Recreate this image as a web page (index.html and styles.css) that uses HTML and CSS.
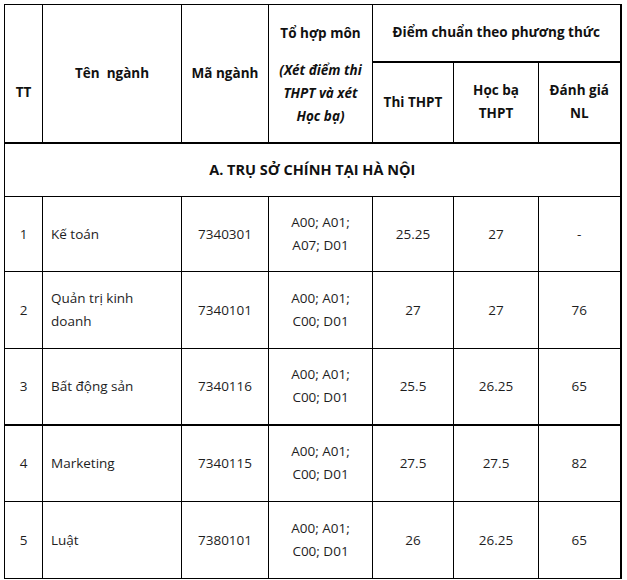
FILE: index.html
```html
<!DOCTYPE html>
<html lang="vi">
<head>
<meta charset="utf-8">
<title>Điểm chuẩn</title>
<link rel="stylesheet" href="styles.css">
</head>
<body>
<div class="wrap">
<table class="scores">
  <colgroup>
    <col class="c-tt"><col class="c-name"><col class="c-code"><col class="c-combo"><col class="c-thpt"><col class="c-hb"><col class="c-nl">
  </colgroup>
  <thead>
    <tr class="h1">
      <th rowspan="2" class="tt-head">TT</th>
      <th rowspan="2">Tên&nbsp; ngành</th>
      <th rowspan="2">Mã ngành</th>
      <th rowspan="2" class="combo-head"><p class="p1">Tổ hợp môn</p><p class="p2"><em>(Xét điểm thi THPT và xét Học bạ)</em></p></th>
      <th colspan="3" class="group">Điểm chuẩn theo phương thức</th>
    </tr>
    <tr class="h2">
      <th>Thi THPT</th>
      <th>Học bạ THPT</th>
      <th>Đánh giá NL</th>
    </tr>
  </thead>
  <tbody>
    <tr class="section"><td colspan="7">A. TRỤ SỞ CHÍNH TẠI HÀ NỘI</td></tr>
    <tr class="r1"><td>1</td><td class="name">Kế toán</td><td>7340301</td><td class="combo">A00; A01; A07; D01</td><td>25.25</td><td>27</td><td>-</td></tr>
    <tr class="r2"><td>2</td><td class="name">Quản trị kinh doanh</td><td>7340101</td><td class="combo">A00; A01; C00; D01</td><td>27</td><td>27</td><td>76</td></tr>
    <tr class="r3"><td>3</td><td class="name">Bất động sản</td><td>7340116</td><td class="combo">A00; A01; C00; D01</td><td>25.5</td><td>26.25</td><td>65</td></tr>
    <tr class="r4 thick"><td>4</td><td class="name">Marketing</td><td>7340115</td><td class="combo">A00; A01; C00; D01</td><td>27.5</td><td>27.5</td><td>82</td></tr>
    <tr class="r5"><td>5</td><td class="name">Luật</td><td>7380101</td><td class="combo">A00; A01; C00; D01</td><td>26</td><td>26.25</td><td>65</td></tr>
  </tbody>
</table>
</div>
</body>
</html>
```

FILE: styles.css
```css
html, body {
  margin: 0;
  padding: 0;
  background: #fff;
}
.wrap {
  padding: 4px 0 0 4px;
}
.scores {
  border-collapse: collapse;
  table-layout: fixed;
  width: 616px;
  font-family: "Open Sans", "Noto Sans", sans-serif;
  font-size: 13.5px;
  line-height: 23px;
  color: #1e1e1e;
  border-right: 2px solid #000;
}
.c-tt { width: 38px; }
.c-name { width: 139px; }
.c-code { width: 87px; }
.c-combo { width: 104px; }
.c-thpt { width: 81px; }
.c-hb { width: 85px; }
.c-nl { width: 82px; }

.scores th, .scores td {
  border: 1px solid #000;
  text-align: center;
  vertical-align: middle;
  padding: 0 8px;
}
.scores th {
  font-weight: 700;
  color: #111;
}
.scores thead tr.h2 th {
  border-top: 2px solid #000;
  border-bottom: 2px solid #000;
}
.scores thead th[rowspan] {
  border-bottom: 2px solid #000;
}
.scores th:last-child, .scores td:last-child {
  border-right: 2px solid #000;
}
.h1 { height: 57px; }
.h2 { height: 81px; }
.scores th.tt-head {
  padding-top: 38px;
}
.scores th.combo-head {
  padding-top: 3px;
}
.combo-head p { margin: 0; }
.combo-head .p2 { margin-top: 14px; }
.section { height: 54px; }
.scores .section td {
  font-weight: 700;
  color: #111;
  font-size: 14.5px;
}
.r1 { height: 75px; }
.r2 { height: 77px; }
.r3 { height: 76px; }
.r4 { height: 77px; }
.r5 { height: 77px; }
.scores .thick td { border-top: 2px solid #000; }
.scores td.name {
  text-align: left;
  padding: 0 16px 0 8px;
}
.scores td.combo {
  padding: 0 12px;
}
```
